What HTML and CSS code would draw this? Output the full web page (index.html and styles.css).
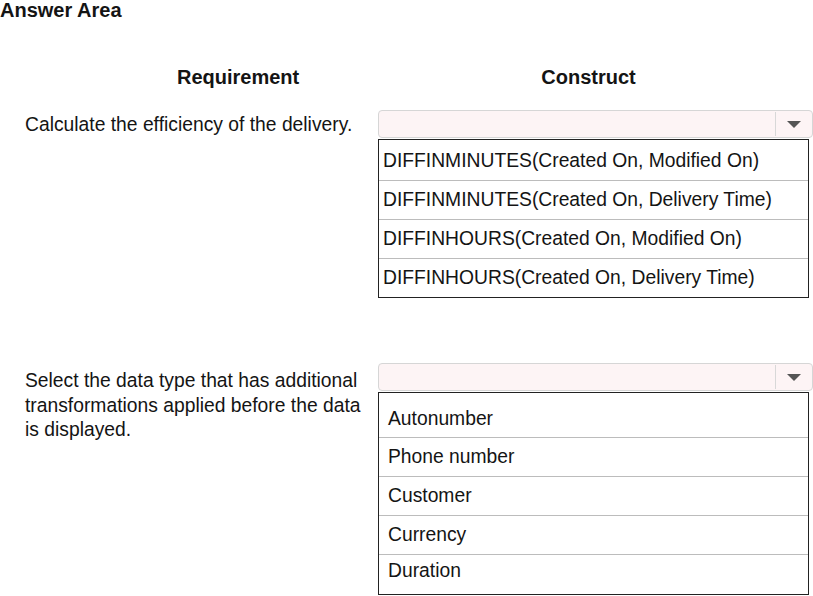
FILE: index.html
```html
<!DOCTYPE html>
<html>
<head>
<meta charset="utf-8">
<link rel="stylesheet" href="styles.css">
</head>
<body>
<div class="page">
  <div class="title">Answer Area</div>
  <div class="heads">
    <div class="head-req">Requirement</div>
    <div class="head-con">Construct</div>
  </div>
  <div class="row row1">
    <div class="req req1">Calculate the efficiency of the delivery.</div>
    <div class="con">
      <div class="select"><span class="arrow"></span></div>
      <ul class="list list1">
        <li>DIFFINMINUTES(Created On, Modified On)</li>
        <li>DIFFINMINUTES(Created On, Delivery Time)</li>
        <li>DIFFINHOURS(Created On, Modified On)</li>
        <li>DIFFINHOURS(Created On, Delivery Time)</li>
      </ul>
    </div>
  </div>
  <div class="row row2">
    <div class="req req2">Select the data type that has additional transformations applied before the data is displayed.</div>
    <div class="con">
      <div class="select"><span class="arrow"></span></div>
      <ul class="list list2">
        <li>Autonumber</li>
        <li>Phone number</li>
        <li>Customer</li>
        <li>Currency</li>
        <li>Duration</li>
      </ul>
    </div>
  </div>
</div>
</body>
</html>
```

FILE: styles.css
```css
* { box-sizing: border-box; }
html, body { margin: 0; padding: 0; background: #fff; }
body {
  font-family: "Liberation Sans", Arial, sans-serif;
  color: #141414;
  width: 813px;
  height: 596px;
  overflow: hidden;
}
.title {
  font-weight: bold;
  font-size: 20px;
  line-height: 20px;
  height: 18px;
}
.heads {
  display: flex;
  margin-top: 49px;
  height: 20px;
  font-weight: bold;
  font-size: 20px;
  line-height: 20px;
}
.head-req { margin-left: 177px; }
.head-con { margin-left: 242px; }
.row { display: flex; }
.row1 { margin-top: 23px; }
.row2 { margin-top: 65px; }
.req {
  width: 378px;
  padding-left: 25px;
  font-size: 19.3px;
  line-height: 24.5px;
}
.req1 { padding-top: 3px; }
.req2 { padding-top: 6px; padding-right: 6px; }
.con { width: 435px; }
.select {
  position: relative;
  height: 28px;
  border: 1px solid #d6d6d6;
  border-radius: 4px;
  background: #fdf4f5;
}
.select::after {
  content: "";
  position: absolute;
  right: 36px;
  top: 1px;
  bottom: 1px;
  border-left: 1px solid #d8d8d8;
}
.arrow {
  position: absolute;
  right: 11px;
  top: 10px;
  width: 0;
  height: 0;
  border-left: 7px solid transparent;
  border-right: 7px solid transparent;
  border-top: 7px solid #555;
}
.list {
  list-style: none;
  margin: 1px 0 0;
  padding: 0;
  width: 431px;
  border: 1px solid #222;
  font-size: 19.3px;
  line-height: 38px;
}
.list li {
  border-top: 1px solid #bcbcbc;
  height: 39px;
}
.list li:first-child { border-top: none; }
.list1 li { padding-left: 4px; }
.list1 li:first-child { height: 40px; padding-top: 2px; }
.list2 li { padding-left: 9px; }
.list2 li:first-child { height: 44px; padding-top: 8px; line-height: 36px; }
.list2 li:last-child { line-height: 31px; }
.list2 { height: 203px; }
```
